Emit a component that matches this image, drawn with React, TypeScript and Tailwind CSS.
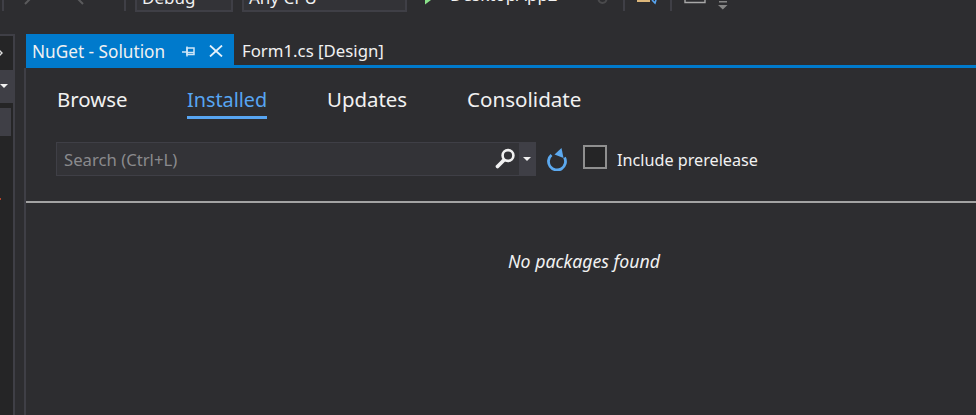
import React from "react";

function Tab({ label, width, size, active }: { label: string; width: string; size: string; active?: boolean }) {
  return (
    <span
      className={`${width} ${size} whitespace-nowrap shrink-0 h-[34px] ${active ? "border-b-[3px] border-[#57a5f2] text-[#57a5f2]" : "text-[#f1f1f1]"}`}
    >
      {label}
    </span>
  );
}

function Sep() {
  return <div className="w-[2px] h-[11px] mb-[1px] bg-[#3f3f46] shrink-0" />;
}

export default function App() {
  return (
    <div className="w-[976px] h-[415px] overflow-hidden bg-[#2d2d30] text-[#f1f1f1] flex flex-col font-['Noto_Sans',sans-serif]">
      {/* toolbar, cropped by the top of the picture */}
      <div className="h-[12px] flex items-end overflow-hidden shrink-0 text-[17px] leading-[24px]">
        <div className="w-[2px] shrink-0" />
        <Sep />
        <div className="w-[20px] shrink-0" />
        <svg width="62" height="12" viewBox="0 0 62 12" className="shrink-0">
          <path d="M6 -1L1 4M54 -1L59 4" stroke="#5a5a5c" strokeWidth="2" fill="none" />
        </svg>
        <div className="w-[38px] shrink-0" />
        <Sep />
        <div className="w-[9px] shrink-0" />
        <div className="w-[98px] h-[28px] border-2 border-[#3f3f46] bg-[#333337] pl-[5px] shrink-0">Debug</div>
        <div className="w-[9px] shrink-0" />
        <div className="w-[165px] h-[28px] border-2 border-[#3f3f46] bg-[#333337] pl-[5px] shrink-0">Any CPU</div>
        <div className="w-[18px] shrink-0" />
        <svg width="7" height="12" viewBox="0 0 7 12" className="shrink-0">
          <path d="M0 0h6L0 4.5z" fill="#8ae28a" />
        </svg>
        <div className="w-[18px] shrink-0" />
        <div className="w-[147px] h-[29px] shrink-0 whitespace-nowrap">DesktopApp2</div>
        <svg width="11" height="12" viewBox="0 0 11 12" className="shrink-0">
          <circle cx="5.5" cy="-1" r="4" fill="none" stroke="#4a4a4c" strokeWidth="2" />
        </svg>
        <div className="w-[15px] shrink-0" />
        <Sep />
        <div className="w-[12px] shrink-0" />
        <svg width="23" height="12" viewBox="0 0 23 12" className="shrink-0">
          <path d="M0 0h13v2H0z" fill="#dcb67a" />
          <path d="M15 0l3 3 1-3" fill="none" stroke="#57a5f2" strokeWidth="1.6" />
        </svg>
        <div className="w-[10px] shrink-0" />
        <Sep />
        <div className="w-[12px] shrink-0" />
        <svg width="22" height="12" viewBox="0 0 22 12" className="shrink-0">
          <path d="M1 0v2.5h20V0" fill="#2d2d30" stroke="#a8a8a8" strokeWidth="1.4" />
        </svg>
        <div className="w-[12px] shrink-0" />
        <svg width="10" height="12" viewBox="0 0 10 12" className="shrink-0">
          <path d="M1 1h8v1.5H1zM0 5h9.5L4.8 9.5z" fill="#858585" />
        </svg>
      </div>
      <div className="h-[22px] shrink-0" />

      <div className="flex-1 flex min-h-0">
        {/* docked panels on the left */}
        <div className="w-[26px] shrink-0 flex">
          <div className="w-[15px] bg-[#252526] border-t-2 border-r-2 border-[#3f3f46] flex flex-col">
            <div className="h-[34px] flex items-center">
              <svg width="3" height="12" viewBox="0 0 3 12">
                <path d="M-3 1l5 5-5 5" fill="none" stroke="#dcdcdc" strokeWidth="1.4" />
              </svg>
            </div>
            <div className="h-[33px] bg-[#3f3f46] pt-[14px]">
              <div className="w-0 h-0 border-x-[4px] border-x-transparent border-t-[4px] border-t-[#f1f1f1]" />
            </div>
            <div className="h-[5px]" />
            <div className="w-[11px] h-[28px] bg-[#3f3f46]" />
            <div className="h-[62px]" />
            <div className="w-[1px] h-[2px] bg-[#b5442a]" />
          </div>
          <div className="w-[9px]" />
          <div className="w-[2px] mt-[34px] bg-[#3f3f46]" />
        </div>

        <div className="flex-1 flex flex-col min-w-0">
          {/* document tab strip */}
          <div className="h-[34px] flex border-b-[3px] border-[#007acc] shrink-0">
            <div className="w-[208px] bg-[#007acc] h-[34px] flex items-center pl-[6px] text-[17.2px] shrink-0">
              <span className="w-[150px] pt-[1px] whitespace-nowrap">NuGet - Solution</span>
              <svg width="13" height="11" viewBox="0 0 13 11" className="shrink-0">
                <path d="M0 6h5" stroke="#cfe6f7" strokeWidth="1.5" fill="none" />
                <path d="M5 0.5v10" stroke="#cfe6f7" strokeWidth="1.5" fill="none" />
                <path d="M5 2h7v6.5H5z" stroke="#cfe6f7" strokeWidth="1.5" fill="none" />
                <path d="M5 6.5h7" stroke="#cfe6f7" strokeWidth="1.5" fill="none" />
              </svg>
              <svg width="14" height="12" viewBox="0 0 14 12" className="ml-[14px] shrink-0">
                <path d="M1 0.5l12 11M13 0.5l-12 11" stroke="#e6f2fb" strokeWidth="1.8" />
              </svg>
            </div>
            <div className="pl-[8px] pt-[2px] text-[16.8px] flex items-center h-[31px] whitespace-nowrap">Form1.cs [Design]</div>
          </div>

          {/* NuGet tabs */}
          <div className="flex gap-[60px] pl-[31px] pt-[17px] leading-[29px] h-[74px] shrink-0">
            <Tab label="Browse" width="w-[70px]" size="text-[20.4px]" />
            <Tab label="Installed" width="w-[80px]" size="text-[19.8px]" active />
            <Tab label="Updates" width="w-[80px]" size="text-[20.4px]" />
            <Tab label="Consolidate" width="w-[114px]" size="text-[20.6px]" />
          </div>

          {/* search row */}
          <div className="flex items-center pl-[30px] h-[34px] shrink-0">
            <div className="w-[480px] h-[34px] bg-[#333337] border border-[#3f3f46] flex items-center shrink-0">
              <span className="pl-[7px] pt-[2px] flex-1 text-[16.7px] text-[#8a8a8d]">Search (Ctrl+L)</span>
              <svg width="22" height="22" viewBox="0 0 22 22" className="mr-[3px] shrink-0">
                <circle cx="14" cy="7.5" r="5.4" fill="none" stroke="#f1f1f1" strokeWidth="2.6" />
                <path d="M9.5 12.5L3.5 18.5" stroke="#f1f1f1" strokeWidth="3.8" strokeLinecap="round" />
              </svg>
              <div className="w-[16px] h-[32px] bg-[#3f3f46] flex items-center justify-center shrink-0">
                <div className="w-0 h-0 border-x-[4px] border-x-transparent border-t-[4px] border-t-[#f1f1f1]" />
              </div>
            </div>
            <svg width="22" height="24" viewBox="0 0 22 24" className="ml-[10px] shrink-0">
              <path d="M5.5 8A8.5 8.5 0 1 0 18.5 10.5" fill="none" stroke="#5ca9ef" strokeWidth="2.8" />
              <path d="M15.5 1L17.5 11L8.5 7.5z" fill="#5ca9ef" />
            </svg>
            <div className="ml-[15px] mt-[-4px] w-[24px] h-[24px] border-2 border-[#8f8f8f] bg-[#252526] shrink-0" />
            <span className="ml-[10px] pt-[3px] text-[16.2px] whitespace-nowrap">Include prerelease</span>
          </div>

          <div className="h-[25px] shrink-0" />
          <div className="h-[2px] bg-[#a3a3a3] shrink-0" />
          <div className="pt-[45px] pl-[166px] text-center text-[17.7px] italic">No packages found</div>
        </div>
      </div>
    </div>
  );
}
